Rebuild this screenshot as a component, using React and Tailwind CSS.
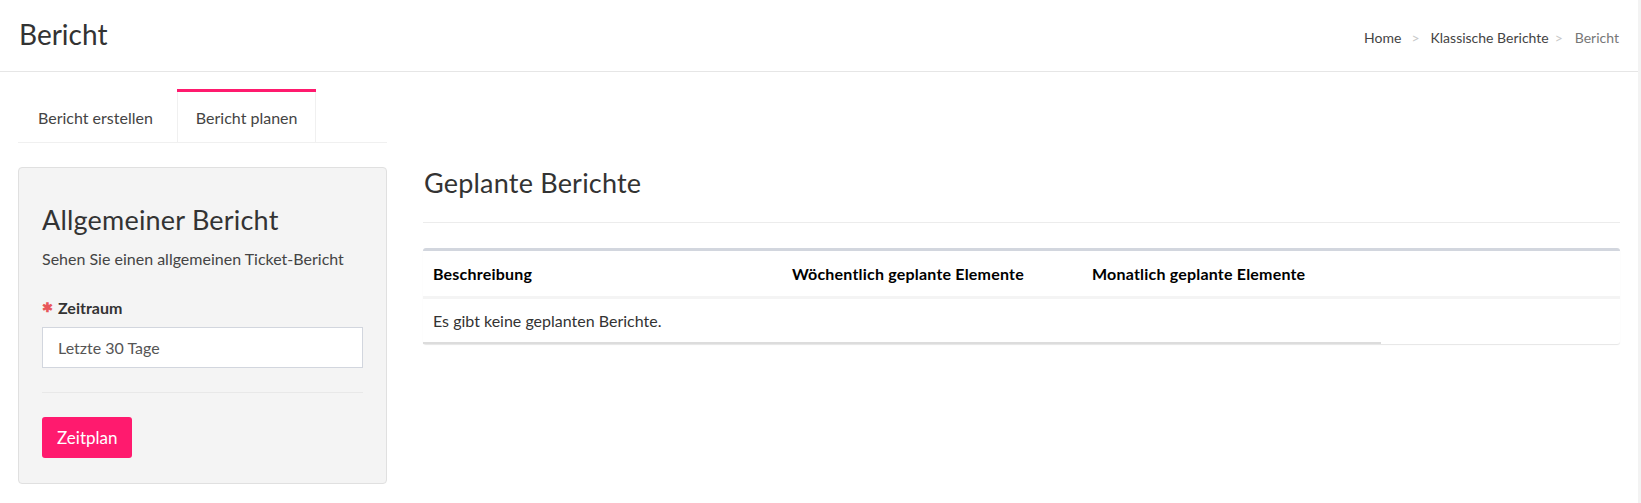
import React from 'react';

const font = { fontFamily: 'Lato, "Noto Sans", sans-serif' };

const Header = () => (
  <div className="flex items-center justify-between h-[72px] border-b border-[#e6e6e6] pl-[19px] pr-[19px]">
    <h1 className="text-[28px] leading-none text-[#333] pb-[3px]">Bericht</h1>
    <nav className="flex items-center text-[14px] text-[#444] pt-[4px]">
      <span>Home</span>
      <span className="text-[#c8c8c8] pl-[10px] pr-[11px]">&gt;</span>
      <span>Klassische Berichte</span>
      <span className="text-[#c8c8c8] pl-[6px] pr-[12px]">&gt;</span>
      <span className="text-[#777]">Bericht</span>
    </nav>
  </div>
);

const Tabs = () => (
  <div className="flex h-[54px] border-b border-[#f0f0f0] mt-[17px]">
    <button className="px-[20px] pt-[5px] text-[16px] text-[#444] mr-[4px]">Bericht erstellen</button>
    <button className="px-[19px] pt-[2px] text-[16px] text-[#444] border-t-[3px] border-[#ff1a6e] relative">
      <span className="absolute left-0 top-0 bottom-0 w-px bg-[#f0f0f0]" />
      <span className="absolute right-0 top-0 bottom-0 w-px bg-[#f0f0f0]" />
      Bericht planen
    </button>
  </div>
);

const ReportCard = () => (
  <div className="mt-[24px] bg-[#f4f4f4] border border-[#e0e0e0] rounded-[4px] px-[23px] pt-[36px] pb-[25px]">
    <h2 className="text-[27px] tracking-[0.2px] leading-[32px] text-[#333]">Allgemeiner Bericht</h2>
    <p className="mt-[11px] text-[16px] text-[#444]">Sehen Sie einen allgemeinen Ticket-Bericht</p>
    <label className="flex items-center mt-[25px] text-[16px] font-bold text-[#333]">
      <span className="text-[#e8575a] text-[13px] mr-[5px]">✱</span>
      Zeitraum
    </label>
    <div className="mt-[7px] h-[41px] bg-white border border-[#d2d6de] flex items-center px-[15px] text-[16px] text-[#555]">
      Letzte 30 Tage
    </div>
    <div className="mt-[24px] border-t border-[#e8e8e8]" />
    <button className="mt-[24px] h-[41px] px-[15px] bg-[#ff1a6e] text-white text-[17px] rounded-[3px]">
      Zeitplan
    </button>
  </div>
);

const ScheduledReports = () => (
  <div className="flex-1 pt-[94px]">
    <h2 className="text-[27px] tracking-[0.2px] leading-[34px] text-[#333] pl-[1px]">Geplante Berichte</h2>
    <div className="mt-[22px] border-t border-[#ececec]" />
    <div className="mt-[25px] bg-white border-t-[3px] border-[#d2d6de] rounded-[3px] shadow-[0_1px_1px_rgba(0,0,0,0.1)]">
      <div className="grid grid-cols-[359px_300px_1fr] h-[48px] items-center border-b-[3px] border-[#f4f4f4] text-[16px] tracking-[0.2px] font-bold text-black">
        <div className="px-[10px]">Beschreibung</div>
        <div className="px-[10px]">Wöchentlich geplante Elemente</div>
        <div className="px-[10px]">Monatlich geplante Elemente</div>
      </div>
      <div className="h-[43px] flex items-center px-[10px] text-[16px] text-[#333]">
        Es gibt keine geplanten Berichte.
      </div>
      <div className="h-[2px] w-[958px] bg-[#dcdcdc]" />
    </div>
  </div>
);

export default function App() {
  return (
    <div className="bg-white min-h-screen flex" style={font}>
      <div className="flex-1">
        <Header />
        <div className="flex gap-[36px] pl-[18px] pr-[18px]">
          <div className="w-[369px]">
            <Tabs />
            <ReportCard />
          </div>
          <ScheduledReports />
        </div>
      </div>
      <div className="w-[3px] bg-[#f3f3f3]" />
    </div>
  );
}
